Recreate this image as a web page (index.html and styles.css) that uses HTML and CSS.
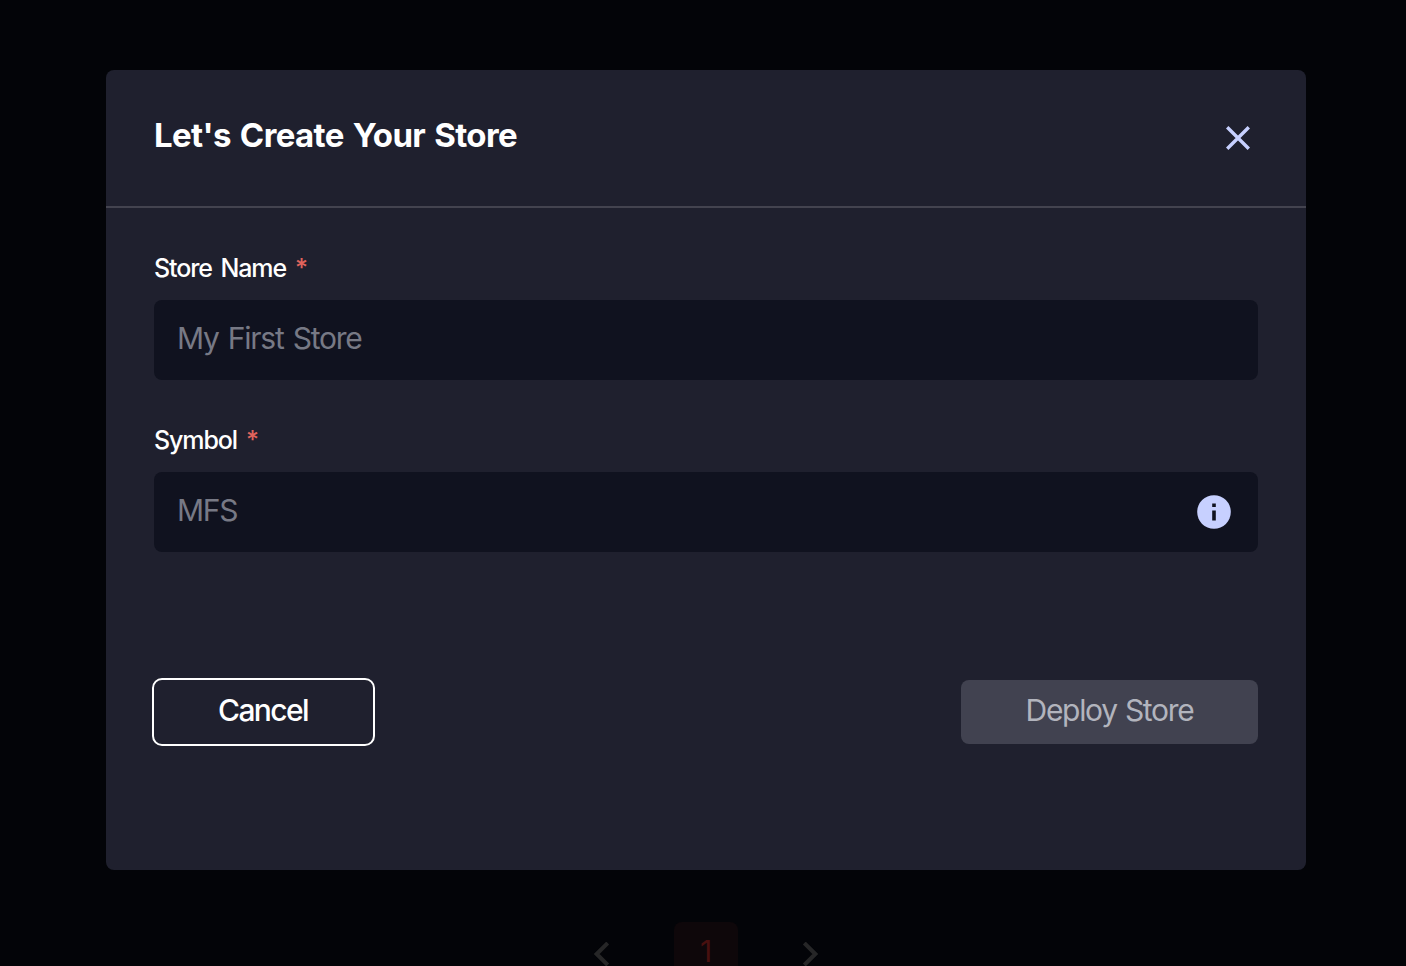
FILE: index.html
```html
<!DOCTYPE html>
<html lang="en">
<head>
<meta charset="utf-8">
<title>Create Store</title>
<link rel="stylesheet" href="styles.css">
</head>
<body>
<div class="page">
  <section class="modal" role="dialog" aria-labelledby="title">
    <header class="modal-header">
      <h1 class="title" id="title">Let's Create Your Store</h1>
      <button class="close" aria-label="Close">
        <svg width="24" height="24" viewBox="0 0 24 24"><path d="M1.2 1.2 22.8 22.8M22.8 1.2 1.2 22.8" fill="none" stroke="#c7d0ff" stroke-width="3.4"/></svg>
      </button>
    </header>
    <div class="modal-body">
      <div class="field">
        <div class="label"><span>Store Name</span><span class="required">*</span></div>
        <div class="input"><span class="placeholder">My First Store</span></div>
      </div>
      <div class="field">
        <div class="label"><span>Symbol</span><span class="required">*</span></div>
        <div class="input"><span class="placeholder">MFS</span>
          <svg class="info" width="34" height="34" viewBox="0 0 34 34"><circle cx="17" cy="17" r="16.8" fill="#c7d0ff"/><path d="M15.2 8.5h3.6v3.5h-3.6zM15.2 15.5h3.6v10h-3.6z" fill="#10121f"/></svg>
        </div>
      </div>
      <div class="actions">
        <button class="button cancel"><span>Cancel</span></button>
        <button class="button deploy" disabled><span>Deploy Store</span></button>
      </div>
    </div>
  </section>
  <nav class="pager" aria-label="Pages">
    <svg class="arrow" width="16" height="24" viewBox="0 0 16 24"><path d="M13.7 1 2.7 12 13.7 23" fill="none" stroke="#262627" stroke-width="4"/></svg>
    <span class="current">1</span>
    <svg class="arrow" width="16" height="24" viewBox="0 0 16 24"><path d="M2.3 1 13.3 12 2.3 23" fill="none" stroke="#262627" stroke-width="4"/></svg>
  </nav>
</div>
</body>
</html>
```
FILE: styles.css
```css
* { box-sizing: border-box; }
body {
  margin: 0;
  background: #030408;
  color: #fff;
  font-family: Inter, "Liberation Sans", sans-serif;
}
.page {
  height: 966px;
  overflow: hidden;
  padding-top: 70px;
}
.modal {
  width: 1200px;
  height: 800px;
  margin-left: 106px;
  border-radius: 8px;
  background: #1f202e;
}
.modal-header {
  display: flex;
  align-items: center;
  justify-content: space-between;
  height: 138px;
  padding: 0 56px 0 48px;
  border-bottom: 2px solid #43434f;
}
.title {
  margin: 0 0 6px;
  font-size: 33px;
  line-height: 40px;
  font-weight: 700;
  letter-spacing: -0.6px;
  word-spacing: 1.8px;
  white-space: nowrap;
}
.close {
  display: flex;
  padding: 0;
  border: 0;
  background: none;
}
.modal-body { padding: 44px 48px 0; }
.field { margin-bottom: 44px; }
.label {
  display: flex;
  gap: 9px;
  height: 48px;
  font-size: 25px;
  line-height: 32px;
  font-weight: 500;
  letter-spacing: -1.1px;
  word-spacing: 3px;
}
.required { color: #e0645c; }
.input {
  display: flex;
  align-items: center;
  justify-content: space-between;
  height: 80px;
  padding: 0 27px 0 23px;
  border-radius: 8px;
  background: #10121f;
}
.placeholder {
  padding-bottom: 4px;
  color: #777985;
  font-size: 30px;
  line-height: 36px;
  letter-spacing: -1.25px;
  word-spacing: 2px;
}
.actions {
  display: flex;
  align-items: center;
  justify-content: space-between;
  margin: 126px 0 0 -2px;
}
.button {
  display: flex;
  align-items: center;
  justify-content: center;
  padding: 0 0 4px;
  border-radius: 8px;
  font-family: inherit;
  font-size: 30px;
  line-height: 36px;
  letter-spacing: -1.3px;
  word-spacing: 1px;
  white-space: nowrap;
}
.cancel {
  width: 223px;
  height: 68px;
  padding-right: 1px;
  border: 2px solid #fff;
  border-radius: 10px;
  background: transparent;
  color: #fff;
  font-weight: 500;
  letter-spacing: -1.6px;
}
.deploy {
  width: 297px;
  height: 64px;
  border: 0;
  background: #414250;
  color: #b2b4bd;
}
.pager {
  display: flex;
  justify-content: center;
  gap: 64px;
  margin: 52px 0 0 6px;
}
.current {
  width: 64px;
  height: 64px;
  border-radius: 8px;
  background: #0e070a;
  color: #48100f;
  font-size: 30px;
  line-height: 59px;
  text-align: center;
}
.arrow { margin-top: 20px; }
```
